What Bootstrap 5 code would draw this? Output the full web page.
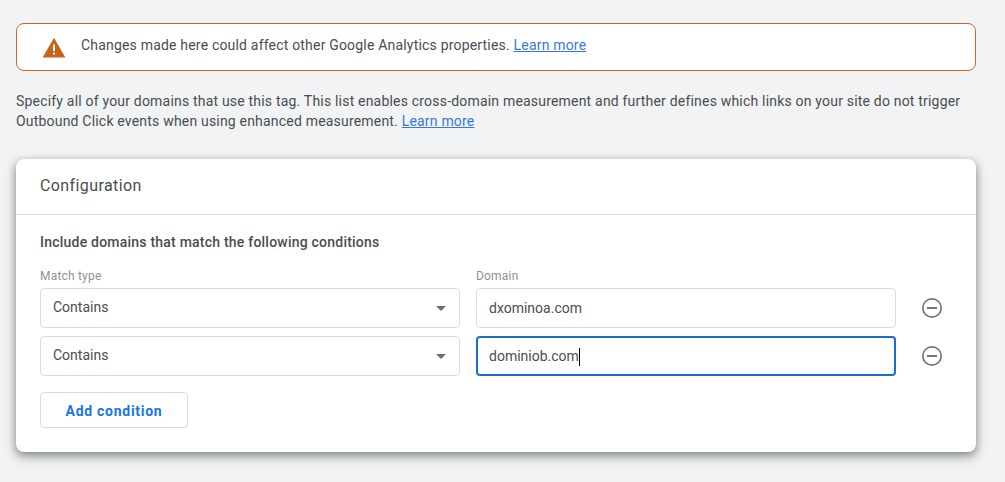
<!DOCTYPE html>
<html lang="en">
<head>
<meta charset="utf-8">
<title>Configuration</title>
<link href="https://cdn.jsdelivr.net/npm/bootstrap@5.3.0/dist/css/bootstrap.min.css" rel="stylesheet">
<style>
html,body{height:100%}
body{background:#f1f3f4;font-family:Roboto,"Liberation Sans",sans-serif;font-size:14px;color:#4a4d50;overflow:hidden}
.page-wrap{width:960px;margin-left:16px;padding-top:23px}
.warn-box{height:48px;border:1px solid #c8682a;border-radius:8px;background:#fff;padding-left:25px;gap:15px;margin-bottom:20px;letter-spacing:.19px}
.warn-box span{margin-top:-4px}
.warn-box a,.intro a{color:#3a78d8}
.intro{line-height:20px;margin-bottom:28px;height:40px;white-space:nowrap;letter-spacing:.195px}
.cfg-card{height:293px;border:0;border-radius:8px;background:#fff;box-shadow:0 3px 8px rgba(60,64,67,.55),0 6px 14px rgba(60,64,67,.18)}
.cfg-head{height:56px;padding:0 24px;border-bottom:1px solid #dadce0;font-size:16px;line-height:54px;color:#4a4d50;letter-spacing:.4px}
.cfg-body{padding:17px 24px 0}
.cfg-sub{font-weight:500;line-height:20px;margin-bottom:17px;color:#4a4d50;letter-spacing:.22px}
.field-label{font-size:12px;line-height:14px;color:#8d9296;margin-bottom:5px;letter-spacing:.2px}
.col-match{width:420px}
.col-domain{width:420px}
.cond-row{gap:16px;margin-bottom:8px}
.fake-select{height:40px;border:1px solid #dadce0;border-radius:4px;background:#fff;padding:0 12px;color:#4a4d50}
.fake-select>span:first-child{margin-top:-2px}
.caret-down{width:0;height:0;border-left:5px solid transparent;border-right:5px solid transparent;border-top:5px solid #6a6e72;margin-right:1px}
.text-box{height:40px;border:1px solid #dadce0;border-radius:4px;padding:0 12px;font-size:14px;color:#4a4d50;box-shadow:none}
.text-box:focus{border-color:#dadce0;box-shadow:none}
.text-active,.text-active:focus{border:2px solid #1a6dcc;padding:0 11px}
.minus-slot{width:40px}
.add-btn{width:148px;height:36px;margin-top:8px;border:1px solid #dadce0;border-radius:4px;background:#fff;color:#1a73e8;font-size:14px;font-weight:700;padding:2px 0 0;letter-spacing:.72px}
.add-btn:hover{background:#fff;color:#1a73e8;border-color:#dadce0}
.caret-mark{display:inline-block;width:1px;height:18px;background:#000;vertical-align:middle}
.typed{line-height:36px;height:40px}
</style>
</head>
<body>
<div class="page-wrap">
  <div class="warn-box d-flex align-items-center">
    <svg width="24" height="21" viewBox="0 0 24 21" aria-hidden="true"><path d="M12 .8 23.4 20.6H.6Z" fill="#c8631a"/><rect x="11" y="7.5" width="2" height="6.5" fill="#fff"/><rect x="11" y="15.5" width="2" height="2" fill="#fff"/></svg>
    <span>Changes made here could affect other Google Analytics properties. <a href="#">Learn more</a></span>
  </div>
  <p class="intro">Specify all of your domains that use this tag. This list enables cross-domain measurement and further defines which links on your site do not trigger<br>Outbound Click events when using enhanced measurement. <a href="#">Learn more</a></p>
  <div class="card cfg-card">
    <div class="cfg-head">Configuration</div>
    <div class="cfg-body">
      <div class="cfg-sub">Include domains that match the following conditions</div>
      <div class="d-flex cond-row mb-0">
        <div class="col-match field-label">Match type</div>
        <div class="col-domain field-label">Domain</div>
      </div>
      <div class="d-flex cond-row">
        <div class="col-match fake-select d-flex align-items-center justify-content-between"><span>Contains</span><span class="caret-down"></span></div>
        <input class="form-control col-domain text-box flex-grow-0" type="text" value="dxominoa.com" aria-label="Domain">
        <div class="minus-slot d-flex align-items-center justify-content-center"><svg width="22" height="22" viewBox="0 0 22 22" aria-hidden="true"><circle cx="11" cy="11" r="9.2" fill="none" stroke="#757575" stroke-width="1.7"/><rect x="6" y="10" width="10" height="2" fill="#757575"/></svg></div>
      </div>
      <div class="d-flex cond-row">
        <div class="col-match fake-select d-flex align-items-center justify-content-between"><span>Contains</span><span class="caret-down"></span></div>
        <div class="form-control col-domain text-box text-active typed flex-grow-0">dominiob.com<span class="caret-mark"></span></div>
        <div class="minus-slot d-flex align-items-center justify-content-center"><svg width="22" height="22" viewBox="0 0 22 22" aria-hidden="true"><circle cx="11" cy="11" r="9.2" fill="none" stroke="#757575" stroke-width="1.7"/><rect x="6" y="10" width="10" height="2" fill="#757575"/></svg></div>
      </div>
      <button type="button" class="btn add-btn">Add condition</button>
    </div>
  </div>
</div>
<script src="https://cdn.jsdelivr.net/npm/bootstrap@5.3.0/dist/js/bootstrap.bundle.min.js"></script>
</body>
</html>
